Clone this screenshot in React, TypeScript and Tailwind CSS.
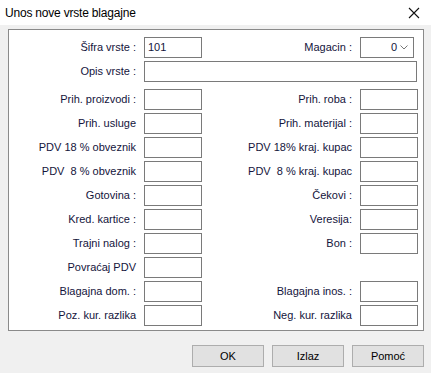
import React from 'react';

type Row = {
  left?: string;
  right?: string;
};

const rows: Row[] = [
  { left: 'Prih. proizvodi :', right: 'Prih. roba :' },
  { left: 'Prih. usluge', right: 'Prih. materijal :' },
  { left: 'PDV 18 % obveznik', right: 'PDV 18% kraj. kupac' },
  { left: 'PDV  8 % obveznik', right: 'PDV  8 % kraj. kupac' },
  { left: 'Gotovina :', right: 'Čekovi :' },
  { left: 'Kred. kartice :', right: 'Veresija:' },
  { left: 'Trajni nalog :', right: 'Bon :' },
  { left: 'Povraćaj PDV' },
  { left: 'Blagajna dom. :', right: 'Blagajna inos. :' },
  { left: 'Poz. kur. razlika', right: 'Neg. kur. razlika' },
];

const Label: React.FC<{ text?: string }> = ({ text }) => (
  <div className="text-right whitespace-pre text-[11px] leading-[21px] text-[#14143c]">{text}</div>
);

const Box: React.FC<{ children?: React.ReactNode; className?: string }> = ({ children, className }) => (
  <div className={`h-[21px] bg-white border border-[#7a7a7a] ${className ?? ''}`}>{children}</div>
);

const App: React.FC = () => {
  return (
    <div
      className="w-[431px] h-[373px] bg-[#f0f0f0] overflow-hidden"
      style={{ fontFamily: '"Liberation Sans", Arial, sans-serif' }}
    >
      {/* Title bar */}
      <div className="h-[25px] bg-white flex items-center justify-between pl-[5px] pr-[11px]">
        <span className="text-[12px] text-black tracking-[-0.2px]">Unos nove vrste blagajne</span>
        <svg width="12" height="12" viewBox="0 0 12 12">
          <path d="M1 1 L11 11 M11 1 L1 11" stroke="#111" strokeWidth="1.1" fill="none" />
        </svg>
      </div>

      {/* Panel */}
      <div className="mt-[4px] ml-[8px] w-[416px] h-[302px] border border-[#8a8a8a] bg-white pt-[7px] pr-[5px]">
        <div className="grid grid-cols-[127px_58px_142px_58px] gap-x-[8px] gap-y-[3px]">
          <Label text="Šifra vrste :" />
          <Box className="px-[3px] text-[11px] leading-[19px] text-[#14143c]">101</Box>
          <Label text="Magacin :" />
          <Box className="w-[54px] flex items-center justify-end pr-[5px] gap-[3px]">
            <span className="text-[11px] text-[#14143c]">0</span>
            <svg width="8" height="5" viewBox="0 0 8 5">
              <path d="M0.5 0.5 L4 4 L7.5 0.5" stroke="#777" strokeWidth="1" fill="none" />
            </svg>
          </Box>

          <Label text="Opis vrste :" />
          <Box className="col-span-3 mr-[1px] mb-[4px]" />

          {rows.map((r, i) => (
            <React.Fragment key={i}>
              <Label text={r.left} />
              <Box />
              <Label text={r.right} />
              {r.right ? <Box /> : <div className="h-[21px]" />}
            </React.Fragment>
          ))}
        </div>
      </div>

      {/* Buttons */}
      <div className="flex justify-end gap-[8px] pr-[7px] mt-[14px]">
        {['OK', 'Izlaz', 'Pomoć'].map((b) => (
          <button
            key={b}
            className="w-[72px] h-[22px] bg-[#e1e1e1] border border-[#adadad] text-[11px] text-black"
          >
            {b}
          </button>
        ))}
      </div>
    </div>
  );
};

export default App;
